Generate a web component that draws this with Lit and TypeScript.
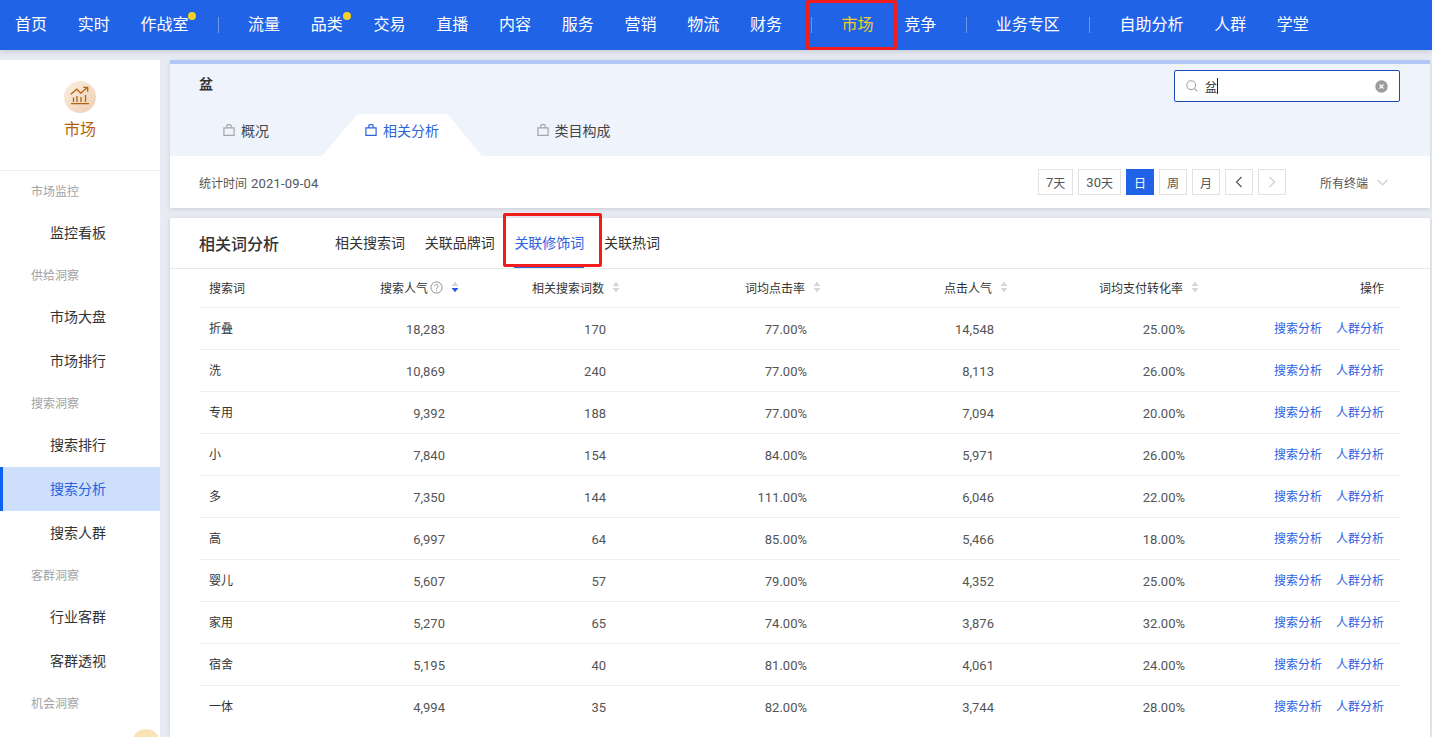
import { LitElement, html, css } from "lit";
import { customElement } from "lit/decorators.js";

const bag = html`<svg class="bag" viewBox="0 0 12 12" width="12" height="12" fill="none" stroke="currentColor" stroke-width="1.2"><path d="M.9 3.8h10.2v7.6H.9z"/><path d="M3.8 3.8V1.9C3.8 1.1 4.3.7 5 .7h2c.7 0 1.2.4 1.2 1.2v1.9"/></svg>`;
const sort = (on: boolean) => html`<svg class="sort" viewBox="0 0 8 12" width="8" height="12"><path d="M4 .8 7.4 5H.6z" fill="#cfd6e0"/><path d="M4 11.2.6 7h6.8z" fill="${on ? "#2458d8" : "#cfd6e0"}"/></svg>`;

const NAV: (string | null | [string, string])[] = [
  "首页", "实时", ["作战室", "dot"], null, "流量", ["品类", "dot"], "交易", "直播", "内容", "服务", "营销", "物流", "财务", null,
  ["市场", "on"], "竞争", null, "业务专区", null, "自助分析", "人群", "学堂",
];

const SIDE: [string, string][] = [
  ["g", "市场监控"], ["i", "监控看板"], ["g", "供给洞察"], ["i", "市场大盘"], ["i", "市场排行"], ["g", "搜索洞察"],
  ["i", "搜索排行"], ["act", "搜索分析"], ["i", "搜索人群"], ["g", "客群洞察"], ["i", "行业客群"], ["i", "客群透视"], ["g", "机会洞察"],
];

const ROWS = [
  ["折叠", "18,283", "170", "77.00%", "14,548", "25.00%"],
  ["洗", "10,869", "240", "77.00%", "8,113", "26.00%"],
  ["专用", "9,392", "188", "77.00%", "7,094", "20.00%"],
  ["小", "7,840", "154", "84.00%", "5,971", "26.00%"],
  ["多", "7,350", "144", "111.00%", "6,046", "22.00%"],
  ["高", "6,997", "64", "85.00%", "5,466", "18.00%"],
  ["婴儿", "5,607", "57", "79.00%", "4,352", "25.00%"],
  ["家用", "5,270", "65", "74.00%", "3,876", "32.00%"],
  ["宿舍", "5,195", "40", "81.00%", "4,061", "24.00%"],
  ["一体", "4,994", "35", "82.00%", "3,744", "28.00%"],
];

@customElement("app-root")
export class AppRoot extends LitElement {
  static styles = css`
    :host { display: block; height: 737px; overflow: hidden; background: #e8ebf2; color: #333;
      font-family: Roboto, "Noto Sans CJK SC", sans-serif; font-size: 12px; }
    .top { height: 50px; background: #2063e6; display: flex; align-items: center; padding-left: 15px; gap: 30.72px; color: #fff; font-size: 16px; box-shadow: 0 2px 6px rgba(60,70,100,.18); position: relative; }
    .nav { position: relative; line-height: 50px; white-space: nowrap; }
    .nav.on { color: #f2cc2e; }
    .nav.dot::after { content: ""; position: absolute; right: -8px; top: 12px; width: 8px; height: 8px; border-radius: 50%; background: #f5d21f; }
    .sep { width: 1px; height: 16px; background: rgba(255,255,255,.35); margin: 0 -1.45px; }
    .redbox { position: absolute; border: 3px solid #f11d1d; border-radius: 2px; box-sizing: border-box; pointer-events: none; }
    .redbox.nav-box { left: 806px; top: 0; width: 91px; height: 50px; }
    .redbox.tab-box { left: 333px; top: -5px; width: 99px; height: 54px; }
    .main { display: flex; gap: 10px; padding-top: 10px; }
    .side { width: 160px; height: 677px; flex: none; background: #fff; position: relative; overflow: hidden; }
    .brand { height: 111px; border-bottom: 1px solid #ececec; display: flex; flex-direction: column; align-items: center; padding-top: 21px; box-sizing: border-box; color: #b5620f; font-size: 16px; }
    .brand svg { margin-bottom: 3px; }
    .g { height: 40px; line-height: 42px; padding-left: 31px; color: #a3a3a3; }
    .i { height: 44px; line-height: 44px; padding-left: 50px; font-size: 14px; color: #333; }
    .act { height: 44px; line-height: 44px; padding-left: 47px; font-size: 14px; color: #2a62e0; background: #cddffa; border-left: 3px solid #0e62f2; }
    .float { position: absolute; left: 132px; top: 669px; width: 28px; height: 28px; border-radius: 50%; background: #fbe3b9; }
    .content { flex: 1; min-width: 0; margin-right: 2px; display: flex; flex-direction: column; gap: 10px; }
    .card { background: #fff; box-shadow: 0 1px 4px rgba(60,70,100,.18); position: relative; }
    .hero { background: #eef3fc; border-top: 4px solid #b1c8f5; height: 92px; display: flex; flex-direction: column; }
    .hero-top { height: 50px; display: flex; justify-content: space-between; padding: 6px 30px 0 29px; box-sizing: border-box; }
    .kw { font-size: 14px; font-weight: 700; line-height: 28px; }
    .search { width: 226px; height: 32px; box-sizing: border-box; background: #fff; border: 1px solid #1a4cbd; border-radius: 2px; display: flex; align-items: center; padding: 0 11px; gap: 7px; }
    .caret { width: 1px; height: 16px; background: #222; margin-left: -7px; }
    .search .sp { flex: 1; }
    .tabs { display: flex; height: 42px; font-size: 14px; color: #444; }
    .tab { display: flex; align-items: center; justify-content: center; gap: 6px; padding-bottom: 10px; box-sizing: border-box; }
    .tab .bag { color: #a5a5a5; }
    .tab.t1 { width: 152px; }
    .tab.t2 { width: 160px; color: #2a62e0; background: #fff; clip-path: polygon(0 100%, 33px 3px, 36px 0, 125px 0, 128px 3px, 100% 100%); }
    .tab.t2 .bag { color: #2a62e0; }
    .tab.t3 { width: 183px; }
    .filter { height: 52px; display: flex; align-items: center; padding: 0 42px 0 29px; color: #555; }
    .filter .stat { flex: 1; }
    .en { font-size: 13px; }
    .date { letter-spacing: .2px; margin-left: 1px; }
    .btn { height: 26px; padding: 0 7px; box-sizing: border-box; border: 1px solid #e2e2e2; margin-right: 5px; display: flex; align-items: center; justify-content: center; color: #555; background: #fff; }
    .btn.w { padding: 0; width: 28px; }
    .btn.cur { background: #2063e6; border-color: #2063e6; color: #fff; }
    .term { margin-left: 29px; margin-right: 9px; }
    .table-card { height: 519px; }
    .head { height: 50px; border-bottom: 1px solid #e8e8e8; display: flex; align-items: center; padding-left: 29px; position: relative; }
    .title { font-size: 16px; font-weight: 500; color: #333; width: 136px; }
    .sub { margin-right: 19.7px; font-size: 14px; line-height: 50px; position: relative; color: #333; }
    .sub.cur { color: #2a62e0; }
    .sub.cur::after { content: ""; position: absolute; left: 0; right: 0; bottom: 0; height: 2px; background: #2a62e0; }
    .tbl { margin: 0 29px; }
    .row { display: grid; grid-template-columns: 120px 116px 161px 201px 187px 191px 199px; padding: 0 16px 0 10px; border-bottom: 1px solid #f0f0f0; align-items: center; height: 41px; }
    .row:last-child { border-bottom: none; }
    .row.h { height: 38px; }
    .h > span { padding-bottom: 2px; }
    .r { text-align: right; display: flex; justify-content: flex-end; align-items: center; }
    .num { padding-top: 1px; font-size: 13px; color: #555; }
    .sort { margin-left: 8px; margin-right: -14px; }
    .help { margin: 0 0 0 2px; }
    .link { color: #2a62e0; margin-left: 14px; }
    .op, .name { padding-bottom: 2px; }
  `;

  render() {
    return html`
      <div class="top">
        ${NAV.map((n) => n === null ? html`<span class="sep"></span>` : Array.isArray(n) ? html`<span class="nav ${n[1]}">${n[0]}</span>` : html`<span class="nav">${n}</span>`)}
        <div class="redbox nav-box"></div>
      </div>
      <div class="main">
        <aside class="side">
          <div class="brand">
            <svg width="32" height="32" viewBox="0 0 32 32">
              <defs><linearGradient id="bg" x1="0" y1="0" x2="1" y2="1"><stop offset="0" stop-color="#fbeee2"/><stop offset="1" stop-color="#efcfb2"/></linearGradient></defs>
              <circle cx="16" cy="16" r="16" fill="url(#bg)"/>
              <g fill="none" stroke="#b5620f" stroke-width="1.3"><path d="M7 22.6h18M9.5 21v-4.5M13 21v-6M17 21v-5M21.5 21v-7"/><path d="M6.8 13.2l6-5 4 4 6.7-6"/><path d="M19.3 6.3h4.4v4.4"/></g>
            </svg>
            市场
          </div>
          ${SIDE.map(([k, t]) => html`<div class="${k}">${t}</div>`)}
          <div class="float"></div>
        </aside>
        <div class="content">
          <section class="card">
            <div class="hero">
              <div class="hero-top">
                <span class="kw">盆</span>
                <label class="search">
                  <svg width="12" height="12" viewBox="0 0 12 12" fill="none" stroke="#a8a8a8" stroke-width="1.1"><circle cx="5.2" cy="5.2" r="4.4"/><path d="M8.4 8.4 11.4 11.4"/></svg>
                  <span>盆</span><span class="caret"></span><span class="sp"></span>
                  <svg width="13" height="13" viewBox="0 0 13 13"><circle cx="6.5" cy="6.5" r="6.2" fill="#9c9c9c"/><path d="M4.5 4.5l4 4M8.5 4.5l-4 4" stroke="#fff" stroke-width="1.1"/></svg>
                </label>
              </div>
              <div class="tabs">
                <div class="tab t1">${bag}概况</div>
                <div class="tab t2">${bag}相关分析</div>
                <div class="tab t3">${bag}类目构成</div>
              </div>
            </div>
            <div class="filter">
              <span class="stat">统计时间 <span class="en date">2021-09-04</span></span>
              <span class="btn"><span class="en">7</span>天</span><span class="btn"><span class="en">30</span>天</span><span class="btn w cur">日</span><span class="btn w">周</span><span class="btn w">月</span>
              <span class="btn w"><svg width="8" height="12" viewBox="0 0 8 12" fill="none" stroke="#555" stroke-width="1.2"><path d="M6.5 1 1.5 6l5 5"/></svg></span>
              <span class="btn w"><svg width="8" height="12" viewBox="0 0 8 12" fill="none" stroke="#ccc" stroke-width="1.2"><path d="M1.5 1l5 5-5 5"/></svg></span>
              <span class="term">所有终端</span>
              <svg width="11" height="7" viewBox="0 0 11 7" fill="none" stroke="#c8c8c8" stroke-width="1.1"><path d="M.7 1l4.8 4.8L10.3 1"/></svg>
            </div>
          </section>
          <section class="card table-card">
            <div class="head">
              <span class="title">相关词分析</span>
              <span class="sub">相关搜索词</span><span class="sub">关联品牌词</span><span class="sub cur">关联修饰词</span><span class="sub">关联热词</span>
              <div class="redbox tab-box"></div>
            </div>
            <div class="tbl">
              <div class="row h">
                <span>搜索词</span>
                <span class="r">搜索人气<svg class="help" width="13" height="13" viewBox="0 0 13 13" fill="none" stroke="#8f8f8f"><circle cx="6.5" cy="6.5" r="5.6"/><path d="M4.8 5.2a1.7 1.7 0 1 1 2.6 1.4c-.6.4-.9.7-.9 1.4M6.5 9.2v1"/></svg>${sort(true)}</span>
                ${["相关搜索词数", "词均点击率", "点击人气", "词均支付转化率"].map((t) => html`<span class="r">${t}${sort(false)}</span>`)}
                <span class="r">操作</span>
              </div>
              ${ROWS.map((r) => html`<div class="row">
                <span class="name">${r[0]}</span>
                ${r.slice(1).map((c) => html`<span class="r num">${c}</span>`)}
                <span class="r op"><span class="link">搜索分析</span><span class="link">人群分析</span></span>
              </div>`)}
            </div>
          </section>
        </div>
      </div>
    `;
  }
}
